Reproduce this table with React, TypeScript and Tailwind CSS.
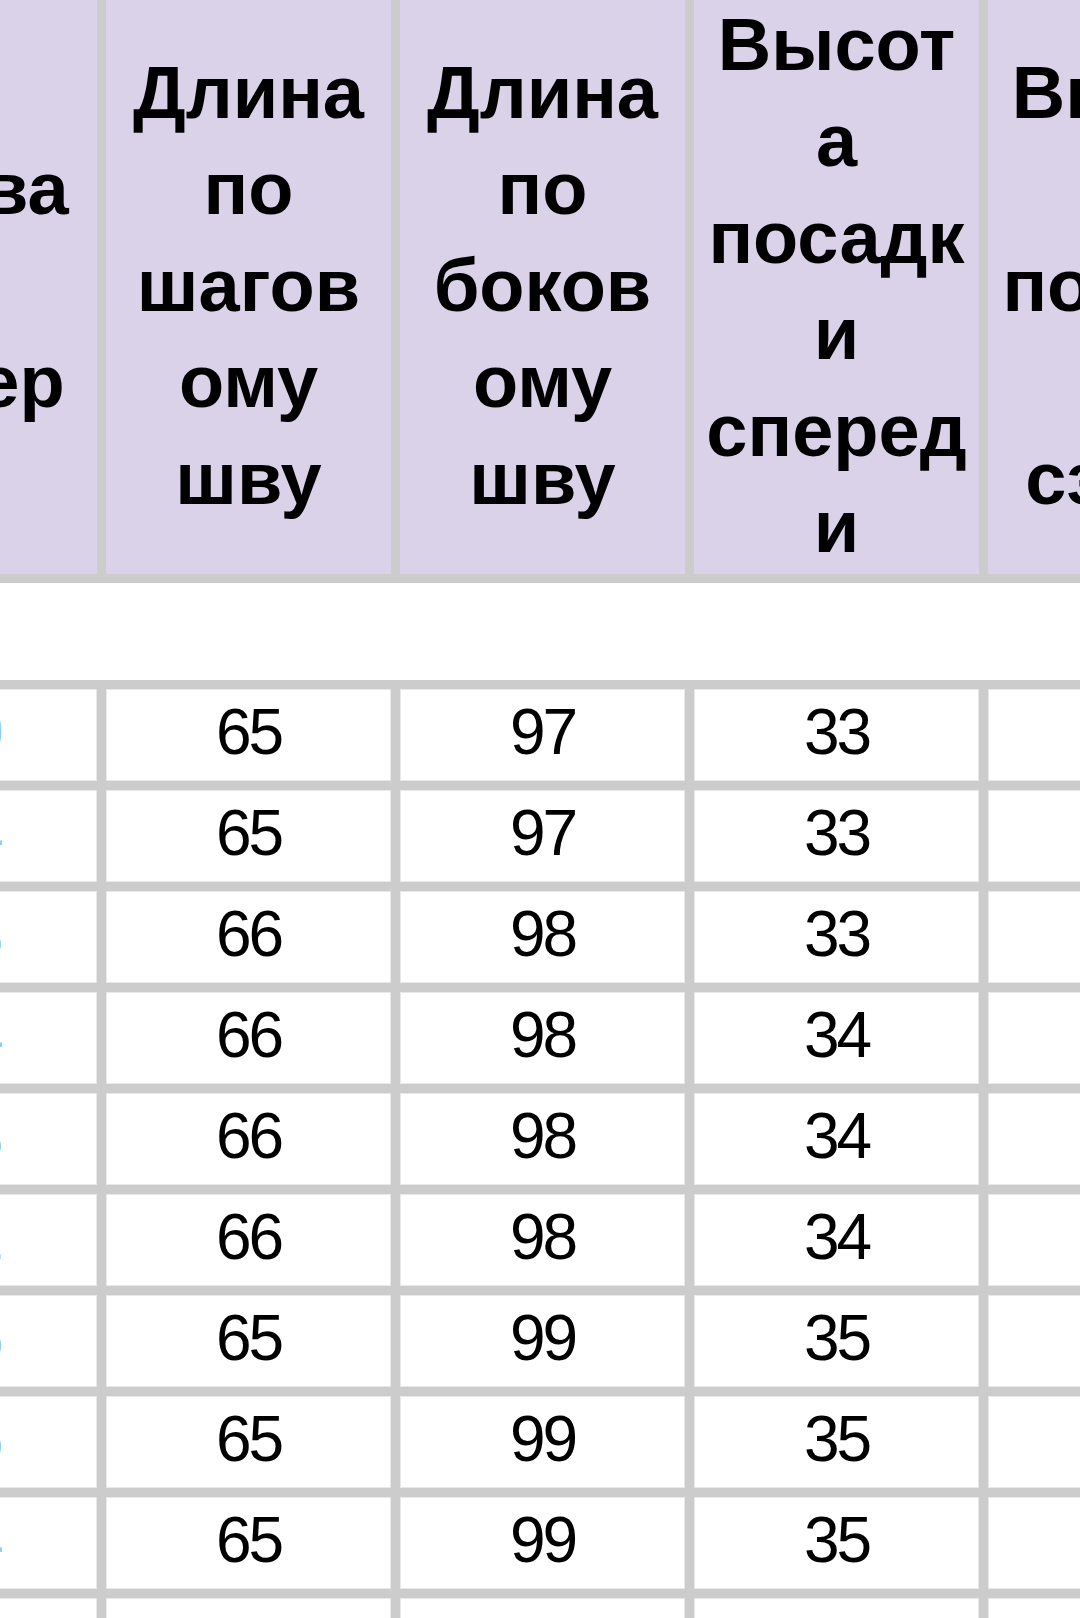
const headers: string[][] = [
  ['Обхва', 'т', 'бедер'],
  ['Длина', 'по', 'шагов', 'ому', 'шву'],
  ['Длина', 'по', 'боков', 'ому', 'шву'],
  ['Высот', 'а', 'посадк', 'и', 'сперед', 'и'],
  ['Высот', 'а', 'посадк', 'и', 'сзади'],
];

const rows: string[][] = [
  ['100', '65', '97', '33', '40'],
  ['104', '65', '97', '33', '40'],
  ['103', '66', '98', '33', '41'],
  ['104', '66', '98', '34', '41'],
  ['103', '66', '98', '34', '41'],
  ['102', '66', '98', '34', '42'],
  ['105', '65', '99', '35', '42'],
  ['106', '65', '99', '35', '42'],
  ['104', '65', '99', '35', '43'],
  ['', '', '', '', ''],
];

const App = () => {
  return (
    <div className="w-[1080px] h-[1618px] overflow-hidden bg-white font-['Liberation_Sans',Arial,sans-serif]">
      <div className="grid w-max grid-cols-[repeat(5,285px)] gap-[9px] bg-[#cccccc] ml-[-188px] mt-[-2px]">
        {/* Header */}
        {headers.map((lines, i) => (
          <div
            key={i}
            className="h-[576px] bg-[#d9d2e9] flex items-center justify-center text-center text-[74px] leading-[96.5px] font-bold text-black"
          >
            <div>
              {lines.map((l, j) => (
                <div key={j}>{l}</div>
              ))}
            </div>
          </div>
        ))}

        {/* Empty row */}
        <div className="col-span-5 h-[97px] bg-white" />

        {/* Body */}
        {rows.map((row, r) =>
          row.map((v, c) => (
            <div
              key={r + '-' + c}
              className={
                c === 0
                  ? 'h-[92px] bg-white border border-[#e8e8e8] flex items-center justify-center pr-[8px] pb-[6px] text-[64px] text-[#8ccff7]'
                  : 'h-[92px] bg-white border border-[#e8e8e8] flex items-center justify-center pb-[6px] text-[64px] tracking-[-3px] text-black'
              }
            >
              {v}
            </div>
          ))
        )}
      </div>
    </div>
  );
};

export default App;
